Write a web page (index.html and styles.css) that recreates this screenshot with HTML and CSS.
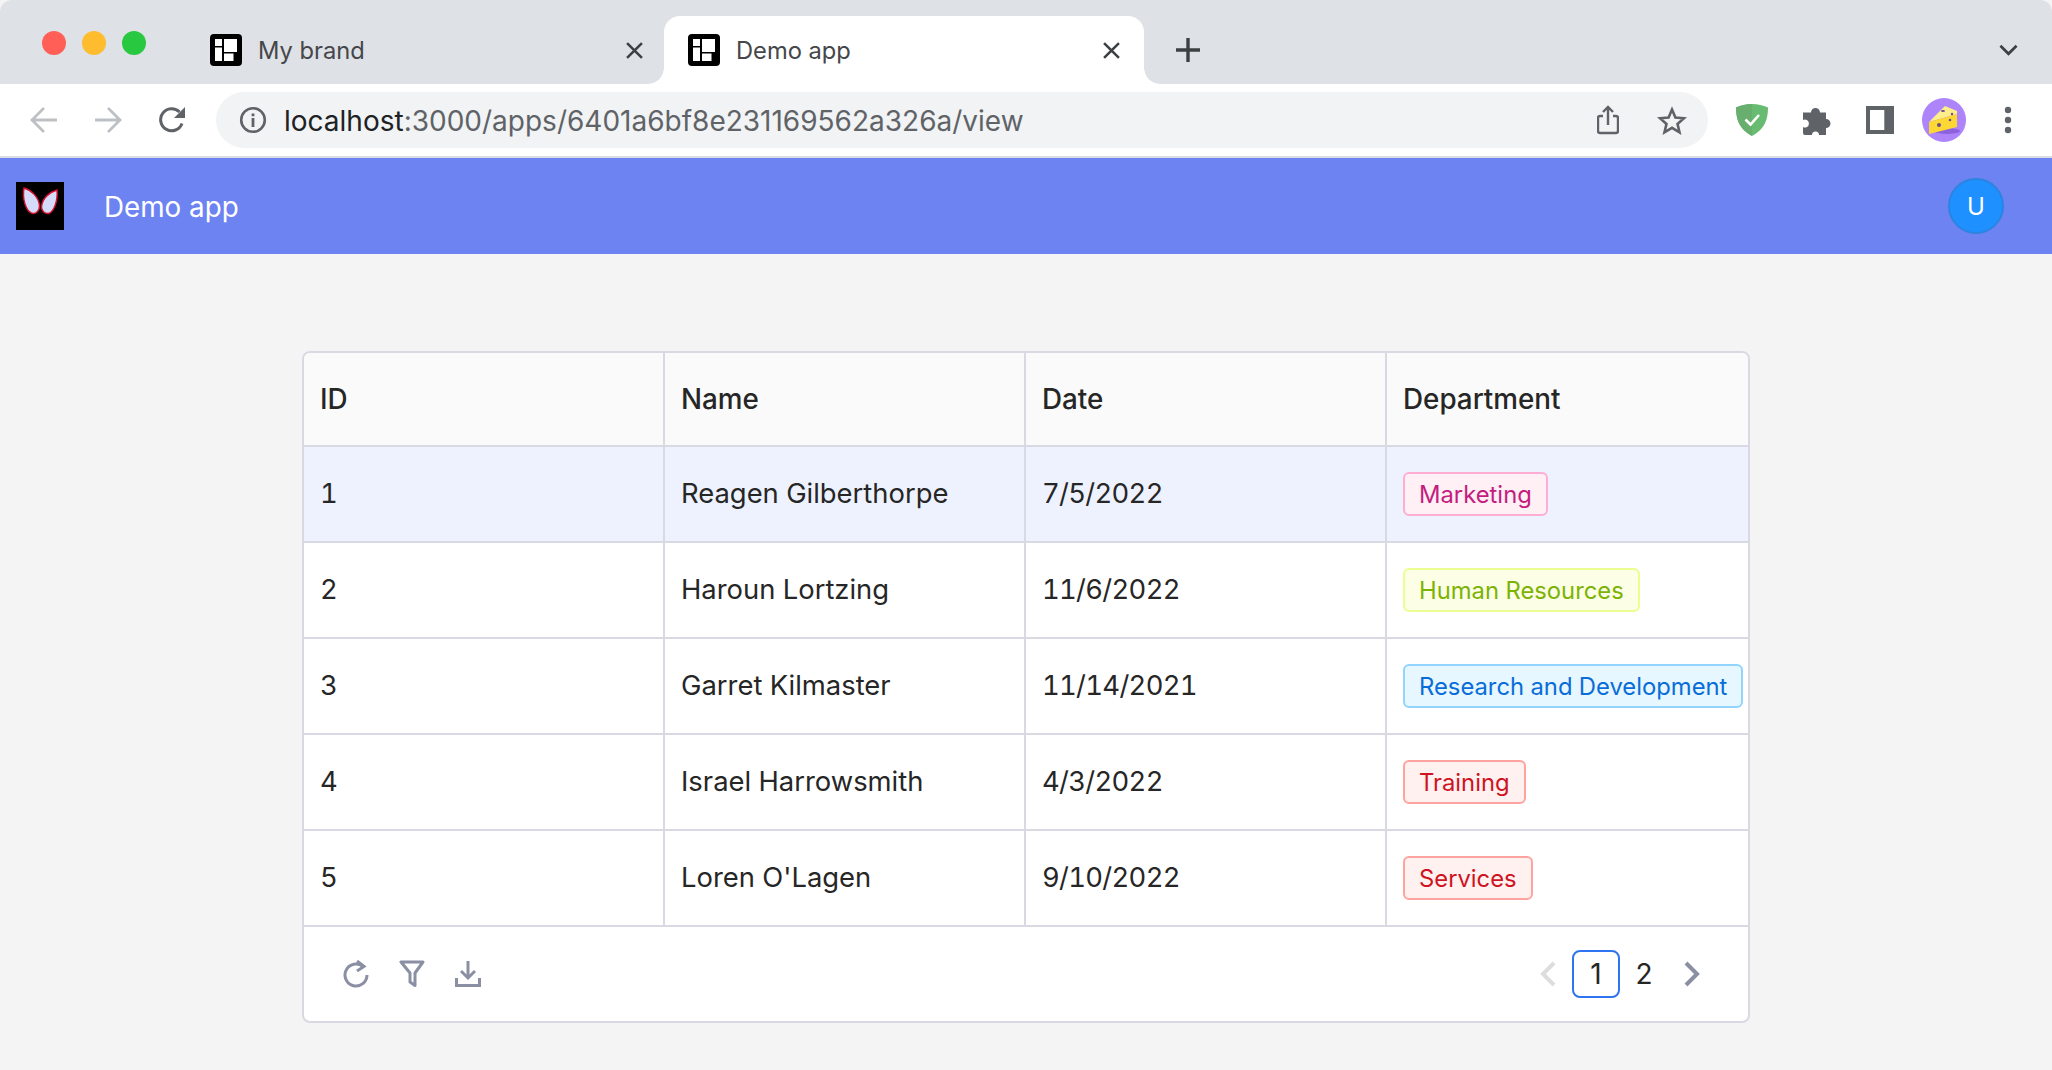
FILE: index.html
```html
<!DOCTYPE html>
<html lang="en">
<head>
  <meta charset="UTF-8">
  <title>Demo app</title>
  <link rel="stylesheet" href="styles.css">
</head>
<body>
  <div class="tabstrip">
    <div class="lights">
      <span class="light red"></span>
      <span class="light yellow"></span>
      <span class="light green"></span>
    </div>
    <div class="tab">
      <svg class="favicon" viewBox="0 0 32 32"><rect width="32" height="32" rx="4" fill="#000"/><path fill="#fff" d="M5 5h7v7H5zM5 13.500h7V27H5zM14 5h13v13H14zM14 19.500h9.500V27H14z"/></svg>
      <span class="tab-title">My brand</span>
      <svg class="tab-close" viewBox="0 0 16 16"><path d="M1 1l14 14M15 1L1 15" stroke="#3c4043" stroke-width="2.400" fill="none"/></svg>
    </div>
    <div class="tab active">
      <svg class="favicon" viewBox="0 0 32 32"><rect width="32" height="32" rx="4" fill="#000"/><path fill="#fff" d="M5 5h7v7H5zM5 13.500h7V27H5zM14 5h13v13H14zM14 19.500h9.500V27H14z"/></svg>
      <span class="tab-title">Demo app</span>
      <svg class="tab-close" viewBox="0 0 16 16"><path d="M1 1l14 14M15 1L1 15" stroke="#3c4043" stroke-width="2.400" fill="none"/></svg>
    </div>
    <svg class="new-tab" viewBox="0 0 24 24"><path d="M12 0v24M0 12h24" stroke="#3c4043" stroke-width="3.400" fill="none"/></svg>
    <svg class="tab-menu" viewBox="0 0 20 12"><path d="M1.500 1.500L10 10l8.500-8.500" stroke="#3c4043" stroke-width="2.800" fill="none"/></svg>
  </div>

  <div class="toolbar">
    <svg class="nav-icon" viewBox="0 0 28 28"><path d="M27 14H3M14 2L2 14l12 12" stroke="#bdc1c6" stroke-width="2.800" fill="none"/></svg>
    <svg class="nav-icon" viewBox="0 0 28 28"><path d="M1 14h24M14 2l12 12-12 12" stroke="#bdc1c6" stroke-width="2.800" fill="none"/></svg>
    <svg class="nav-icon" viewBox="0 0 28 28"><path d="M24 17.500A11 11 0 1 1 21.500 6" stroke="#5f6368" stroke-width="3" fill="none"/><path d="M27 1v11H16z" fill="#5f6368"/></svg>
    <div class="address">
      <svg class="info-icon" viewBox="0 0 28 28"><circle cx="14" cy="14" r="11.800" stroke="#5f6368" stroke-width="2.600" fill="none"/><path d="M12.600 12h2.800v9h-2.800zM12.600 7.500h2.800v2.800h-2.800z" fill="#5f6368"/></svg>
      <span class="url"><span class="host">localhost</span>:3000/apps/6401a6bf8e231169562a326a/view</span>
      <svg class="share-icon" viewBox="0 0 22 30"><path d="M6 11H3a2 2 0 0 0-2 2v13a2 2 0 0 0 2 2h16a2 2 0 0 0 2-2V13a2 2 0 0 0-2-2h-3" stroke="#5f6368" stroke-width="2.400" fill="none"/><path d="M11 20V2M6 7l5-5 5 5" stroke="#5f6368" stroke-width="2.400" fill="none"/></svg>
      <svg class="star-icon" viewBox="0 0 30 29"><path d="M15 3.500l3.400 8 8.600.7-6.500 5.700 2 8.400-7.500-4.500-7.500 4.500 2-8.400L3 12.200l8.600-.7z" stroke="#5f6368" stroke-width="2.600" fill="none"/></svg>
    </div>
    <svg class="shield" viewBox="0 0 32 32"><path d="M16 0C10 0 5 1.500 0 3.500 0 15 3 25 16 32 29 25 32 15 32 3.500 27 1.500 22 0 16 0z" fill="#68bc71"/><path d="M16 0C10 0 5 1.500 0 3.500 0 15 3 25 16 32z" fill="#67ae6f"/><path d="M9.500 15.500l5 5 8.500-9.500" stroke="#fff" stroke-width="2.600" fill="none"/></svg>
    <svg class="puzzle" viewBox="0 0 29 29"><path d="M0 6.500h8a4.500 4.500 0 1 1 9 0h6V13a4.500 4.500 0 1 1 0 9v7h-7a3.500 3.500 0 0 0-7 0H2a2 2 0 0 1-2-2v-6a4 4 0 1 0 0-7z" fill="#5f6368"/></svg>
    <svg class="panel" viewBox="0 0 28 28"><path d="M0 0h28v28H0zM4 4v20h14.300V4z" fill="#5f6368" fill-rule="evenodd"/></svg>
    <svg class="profile" viewBox="0 0 44 44"><circle cx="22" cy="22" r="22" fill="#ae84fb"/><ellipse cx="25" cy="33" rx="13" ry="3" fill="#8d62dc"/><path d="M7 24L23 8l12 5v3z" fill="#fdee8a"/><path d="M7 24l28-8v13L7 36z" fill="#fdd835"/><circle cx="17" cy="27" r="2" fill="#6b4d8a"/><circle cx="28" cy="22" r="1.300" fill="#6b4d8a"/><circle cx="30" cy="16" r="1.200" fill="#6b4d8a"/><ellipse cx="21" cy="13" rx="2" ry="1" fill="#6b4d8a"/></svg>
    <svg class="dots" viewBox="0 0 8 28"><circle cx="4" cy="4" r="3.200" fill="#5f6368"/><circle cx="4" cy="14" r="3.200" fill="#5f6368"/><circle cx="4" cy="24" r="3.200" fill="#5f6368"/></svg>
  </div>

  <header class="app-header">
    <svg class="logo" viewBox="0 0 48 48"><rect width="48" height="48" fill="#000"/><path d="M8 6C15 8 23 15 23.500 24 23.500 29 20 32 16.500 31.500 10 30 6 17 8 6z" fill="#d5dcfa" stroke="#d4112e" stroke-width="1.400"/><path d="M41 8C34 10 26 16 25.500 25 25.500 29 29 32 32.500 31.500 38 30 42 19 41 8z" fill="#d5dcfa" stroke="#d4112e" stroke-width="1.400"/></svg>
    <span class="app-name">Demo app</span>
    <span class="user-avatar">U</span>
  </header>

  <main class="content">
    <div class="grid">
      <table class="data-table">
        <thead>
          <tr><th>ID</th><th>Name</th><th>Date</th><th>Department</th></tr>
        </thead>
        <tbody>
          <tr class="selected">
            <td>1</td><td>Reagen Gilberthorpe</td><td class="date">7/5/2022</td>
            <td><span class="tag magenta">Marketing</span></td>
          </tr>
          <tr>
            <td>2</td><td>Haroun Lortzing</td><td class="date">11/6/2022</td>
            <td><span class="tag lime">Human Resources</span></td>
          </tr>
          <tr>
            <td>3</td><td>Garret Kilmaster</td><td class="date">11/14/2021</td>
            <td><span class="tag blue">Research and Development</span></td>
          </tr>
          <tr>
            <td>4</td><td>Israel Harrowsmith</td><td class="date">4/3/2022</td>
            <td><span class="tag red">Training</span></td>
          </tr>
          <tr>
            <td>5</td><td>Loren O'Lagen</td><td class="date">9/10/2022</td>
            <td><span class="tag red">Services</span></td>
          </tr>
        </tbody>
      </table>
      <div class="grid-footer">
        <div class="grid-tools">
          <svg class="tool" viewBox="0 0 26 28"><path d="M20 6.500A11 11 0 1 0 24 15" stroke="#8a8fa3" stroke-width="3" fill="none"/><path d="M14 1l7 5.500-7 4.500" stroke="#8a8fa3" stroke-width="3" fill="none"/></svg>
          <svg class="tool" viewBox="0 0 26 28"><path d="M2 2h22l-8 11v12.500l-5-3.500V13z" stroke="#8a8fa3" stroke-width="3" stroke-linejoin="round" fill="none"/></svg>
          <svg class="tool" viewBox="0 0 26 28"><path d="M13 1v16M6 11l7 7 7-7M1.500 18v7.500h23V18" stroke="#8a8fa3" stroke-width="3" fill="none"/></svg>
        </div>
        <div class="pager">
          <svg class="pager-arrow" viewBox="0 0 16 26"><path d="M14 2L3 13l11 11" stroke="#dddddf" stroke-width="4" fill="none"/></svg>
          <span class="page current">1</span>
          <span class="page">2</span>
          <svg class="pager-arrow" viewBox="0 0 16 26"><path d="M2 2l11 11L2 24" stroke="#8a8fa3" stroke-width="4" fill="none"/></svg>
        </div>
      </div>
    </div>
  </main>
</body>
</html>
```

FILE: styles.css
```css
* {
  box-sizing: border-box;
}
html, body {
  height: 100%;
}
body {
  margin: 0;
  background-color: #f4f4f4;
  font-family: Inter, "Liberation Sans", sans-serif;
  color: #262626;
  overflow: hidden;
}

/* browser chrome */
.tabstrip {
  display: flex;
  align-items: center;
  height: 84px;
  padding-top: 16px;
  background-color: #dee1e6;
  border-radius: 12px 12px 0 0;
}
.lights {
  display: flex;
  gap: 16px;
  width: 184px;
  padding-left: 42px;
  margin-top: -14px;
}
.light {
  width: 24px;
  height: 24px;
  border-radius: 50%;
}
.red { background-color: #ff5f57; }
.yellow { background-color: #febc2e; }
.green { background-color: #28c840; }

.tab {
  position: relative;
  display: flex;
  align-items: center;
  width: 480px;
  height: 68px;
  padding: 0 21px 0 26px;
  border-radius: 16px 16px 0 0;
  font-size: 23.700px;
  color: #45474a;
}
.tab.active {
  padding: 0 24px;
  background-color: #fff;
}
.tab.active::before,
.tab.active::after {
  content: "";
  position: absolute;
  bottom: 0;
  width: 16px;
  height: 16px;
}
.tab.active::before {
  left: -16px;
  background: radial-gradient(circle at 0 0, #dee1e6 15.5px, #fff 16px);
}
.tab.active::after {
  right: -16px;
  background: radial-gradient(circle at 100% 0, #dee1e6 15.5px, #fff 16px);
}
.favicon {
  width: 32px;
  height: 32px;
  flex-shrink: 0;
}
.tab-title {
  flex: 1;
  margin-left: 16px;
}
.tab-close {
  width: 17px;
  height: 17px;
}
.new-tab {
  width: 24px;
  height: 24px;
  margin-left: 32px;
}
.tab-menu {
  width: 19px;
  height: 12px;
  margin-left: auto;
  margin-right: 34px;
}

.toolbar {
  display: flex;
  align-items: center;
  height: 74px;
  padding-left: 30px;
  background-color: #fff;
  border-bottom: 2px solid #d9dce1;
}
.nav-icon {
  width: 28px;
  height: 28px;
  margin-right: 36px;
}
.nav-icon:nth-child(3) {
  margin-right: 30px;
}
.address {
  display: flex;
  align-items: center;
  width: 1492px;
  height: 56px;
  padding: 0 21px 0 23px;
  background-color: #f1f3f4;
  border-radius: 28px;
}
.info-icon {
  width: 28px;
  height: 28px;
}
.url {
  flex: 1;
  margin-left: 17px;
  padding-top: 2px;
  font-size: 28px;
  color: #5f6368;
}
.host {
  color: #202124;
}
.share-icon {
  width: 22px;
  height: 30px;
  margin-bottom: 1px;
}
.star-icon {
  width: 30px;
  height: 29px;
  margin-left: 38px;
}
.shield {
  width: 32px;
  height: 32px;
  margin-left: 28px;
}
.puzzle {
  width: 29px;
  height: 29px;
  margin-left: 35px;
}
.panel {
  width: 28px;
  height: 28px;
  margin-left: 34px;
}
.profile {
  width: 44px;
  height: 44px;
  margin-left: 28px;
}
.dots {
  width: 8px;
  height: 28px;
  margin-left: 38px;
}

/* app */
.app-header {
  display: flex;
  align-items: center;
  height: 96px;
  padding: 0 48px 0 16px;
  background-color: #6d83f2;
  color: #fff;
}
.logo {
  width: 48px;
  height: 48px;
}
.app-name {
  margin-left: 40px;
  padding-top: 2px;
  font-size: 27.800px;
}
.user-avatar {
  display: flex;
  align-items: center;
  justify-content: center;
  width: 56px;
  height: 56px;
  margin-left: auto;
  background-color: #1f90ff;
  border: 2px solid #2a84e0;
  border-radius: 50%;
  font-size: 24px;
}

.content {
  padding-top: 97px;
}
.grid {
  width: 1448px;
  margin: 0 auto;
  background-color: #fff;
  border: 2px solid #d9d9e3;
  border-radius: 8px;
  overflow: hidden;
}
.data-table {
  width: 100%;
  table-layout: fixed;
  border-collapse: separate;
  border-spacing: 0;
  font-size: 27.400px;
  font-variant-numeric: tabular-nums;
}
.data-table th {
  height: 94px;
  padding: 0 16px;
  background-color: #fafafa;
  border-bottom: 2px solid #d9d9e3;
  border-right: 2px solid #d9d9e3;
  font-size: 27.800px;
  font-weight: 500;
  text-align: left;
}
.data-table td {
  height: 96px;
  padding: 0 0 2px 16px;
  border-bottom: 2px solid #d9d9e3;
  border-right: 2px solid #d9d9e3;
  white-space: nowrap;
}
.data-table td.date {
  letter-spacing: -0.7px;
}
.data-table th:last-child,
.data-table td:last-child {
  border-right: none;
  padding-bottom: 0;
}
.selected td {
  background-color: #eef2ff;
}
.tag {
  display: inline-block;
  height: 44px;
  padding: 0 14px;
  border: 2px solid;
  border-radius: 6px;
  font-size: 23.800px;
  line-height: 42px;
  vertical-align: middle;
}
.magenta { color: #c41d7f; background-color: #fff0f6; border-color: #ffadd2; }
.lime { color: #7cb305; background-color: #fcffe6; border-color: #eaff8f; }
.blue { color: #096dd9; background-color: #e6f7ff; border-color: #91d5ff; }
.tag.red { color: #cf1322; background-color: #fff1f0; border-color: #ffa39e; }

.grid-footer {
  display: flex;
  align-items: center;
  justify-content: space-between;
  height: 94px;
  padding: 0 48px 0 39px;
}
.grid-tools {
  display: flex;
  gap: 30px;
}
.tool {
  width: 26px;
  height: 28px;
}
.pager {
  display: flex;
  align-items: center;
  font-size: 28px;
}
.pager-arrow {
  width: 16px;
  height: 26px;
}
.page {
  width: 48px;
  height: 48px;
  line-height: 44px;
  text-align: center;
  border: 2px solid transparent;
  border-radius: 8px;
}
.page.current {
  margin-left: 16px;
  border-color: #2f74f0;
}
.page + .pager-arrow {
  margin-left: 16px;
}
```
